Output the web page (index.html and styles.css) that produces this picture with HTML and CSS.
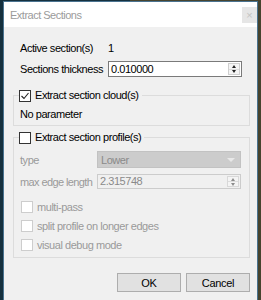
FILE: index.html
```html
<!DOCTYPE html>
<html>
<head>
<meta charset="utf-8">
<link rel="stylesheet" href="styles.css">
</head>
<body>
<div class="window">
  <div class="titlebar">
    <span class="title">Extract Sections</span>
    <span class="close">×</span>
  </div>
  <div class="content">
    <div class="form">
      <span>Active section(s)</span><span>1</span>
      <span>Sections thickness</span>
      <div class="spin"><span>0.010000</span><div class="spinbtns"><i class="up"></i><i class="down"></i></div></div>
    </div>
    <fieldset class="group g1">
      <legend><span class="cb"><svg width="10" height="10" viewBox="0 0 10 10"><polyline points="1.5,5 4,7.5 8.5,2" fill="none" stroke="#222" stroke-width="1.1"/></svg></span>Extract section cloud(s)</legend>
      <div class="note">No parameter</div>
    </fieldset>
    <fieldset class="group g2">
      <legend><span class="cb"></span>Extract section profile(s)</legend>
      <div class="grid2">
        <span class="dis">type</span>
        <div class="combo"><span>Lower</span><i class="arrow"></i></div>
        <span class="dis tight">max edge length</span>
        <div class="spin disabled"><span>2.315748</span><div class="spinbtns"><i class="up"></i><i class="down"></i></div></div>
      </div>
      <div class="checks">
        <div class="chk"><span class="cb off"></span><span>multi-pass</span></div>
        <div class="chk"><span class="cb off"></span><span>split profile on longer edges</span></div>
        <div class="chk"><span class="cb off"></span><span>visual debug mode</span></div>
      </div>
    </fieldset>
    <div class="buttons">
      <button class="btn">OK</button>
      <button class="btn">Cancel</button>
    </div>
  </div>
</div>
</body>
</html>
```
FILE: styles.css
```css
html, body {
  margin: 0;
  height: 300px;
  overflow: hidden;
}
body {
  background: linear-gradient(90deg, #15303e 0, #15303e 50%, #46442f 50%, #46442f 100%);
  font-family: "Liberation Sans", Arial, sans-serif;
  font-size: 11px;
  letter-spacing: -0.45px;
  color: #000;
}
.window {
  margin: 1px 0 0 3px;
  width: 253px;
  height: 298px;
  border: 1px solid #4a7390;
  border-bottom: none;
  background: #f0f0f0;
}
.titlebar {
  height: 25px;
  background: #fff;
  display: flex;
  align-items: center;
  justify-content: space-between;
}
.title {
  padding-left: 6px;
  color: #9b9b9b;
  letter-spacing: -0.5px;
}
.close {
  width: 15px;
  height: 16px;
  background: #e6e6e6;
  color: #c4c4c4;
  font-size: 11px;
  line-height: 16px;
  text-align: center;
  letter-spacing: 0;
}
.content {
  padding: 0 7px 0 9px;
}
.form {
  display: grid;
  grid-template-columns: 88px 134px;
  grid-auto-rows: 16px;
  row-gap: 5px;
  align-items: center;
  margin: 13px 0 0 7px;
  line-height: 16px;
}
.spin {
  box-sizing: border-box;
  height: 16px;
  border: 1px solid #7a7a7a;
  background: #fff;
  display: flex;
  align-items: center;
  justify-content: space-between;
  padding-left: 2px;
  line-height: 14px;
}
.spinbtns {
  box-sizing: border-box;
  width: 12px;
  height: 12px;
  margin-right: 1px;
  border: 1px solid #cfcfcf;
  background: #f4f4f4;
  display: flex;
  flex-direction: column;
}
.spinbtns i {
  flex: 1;
  display: flex;
  align-items: center;
  justify-content: center;
}
.spinbtns i::before {
  content: "";
  width: 0;
  height: 0;
  border-left: 2.5px solid transparent;
  border-right: 2.5px solid transparent;
}
.spinbtns .up::before { border-bottom: 3px solid #222; }
.spinbtns .down::before { border-top: 3px solid #222; }
.spinbtns .up { border-bottom: 1px solid #dcdcdc; }
.group {
  margin: 0;
  padding: 0 6px 4px 5px;
  border: 1px solid #dcdcdc;
  min-width: 0;
}
.g1 { margin-top: 12px; }
.g2 { margin-top: 5px; padding-bottom: 3px; }
legend {
  padding: 0 3px 0 0;
  display: flex;
  align-items: center;
  gap: 4px;
  height: 13px;
  line-height: 13px;
}
.cb {
  box-sizing: border-box;
  width: 12px;
  height: 12px;
  border: 1px solid #333;
  background: #fff;
  display: flex;
  align-items: center;
  justify-content: center;
}
.cb.off {
  border-color: #cdcdcd;
}
.note {
  margin-top: 5px;
  line-height: 14px;
  padding-left: 1px;
}
.grid2 {
  display: grid;
  grid-template-columns: 77px 144px;
  grid-template-rows: 17px 15px;
  row-gap: 6px;
  align-items: center;
  margin-top: 7px;
  padding-left: 1px;
}
.dis { color: #9a9a9a; }
.tight { letter-spacing: -0.6px; }
.combo {
  box-sizing: border-box;
  height: 17px;
  background: #cccccc;
  border: 1px solid #c2c2c2;
  color: #8a8a8a;
  display: flex;
  align-items: center;
  justify-content: space-between;
  padding: 0 5px 0 3px;
}
.arrow {
  width: 0;
  height: 0;
  border-left: 4px solid transparent;
  border-right: 4px solid transparent;
  border-top: 4px solid #e8e8e8;
}
.spin.disabled {
  height: 15px;
  background: #f0f0f0;
  border-color: #cccccc;
  color: #8a8a8a;
  line-height: 13px;
}
.spin.disabled .spinbtns {
  height: 11px;
  border-color: #d8d8d8;
}
.spin.disabled .up::before { border-bottom-color: #8c8c8c; }
.spin.disabled .down::before { border-top-color: #8c8c8c; }
.checks {
  margin-top: 8px;
}
.chk {
  height: 19px;
  display: flex;
  align-items: center;
  gap: 4px;
  padding-left: 2px;
  color: #9a9a9a;
}
.buttons {
  margin-top: 15px;
  display: flex;
  justify-content: flex-end;
  gap: 5px;
}
.btn {
  width: 64px;
  height: 19px;
  padding: 0;
  background: #e1e1e1;
  border: 1px solid #adadad;
  font-family: "Liberation Sans", Arial, sans-serif;
  font-size: 11px;
  letter-spacing: -0.3px;
  color: #000;
}
```
